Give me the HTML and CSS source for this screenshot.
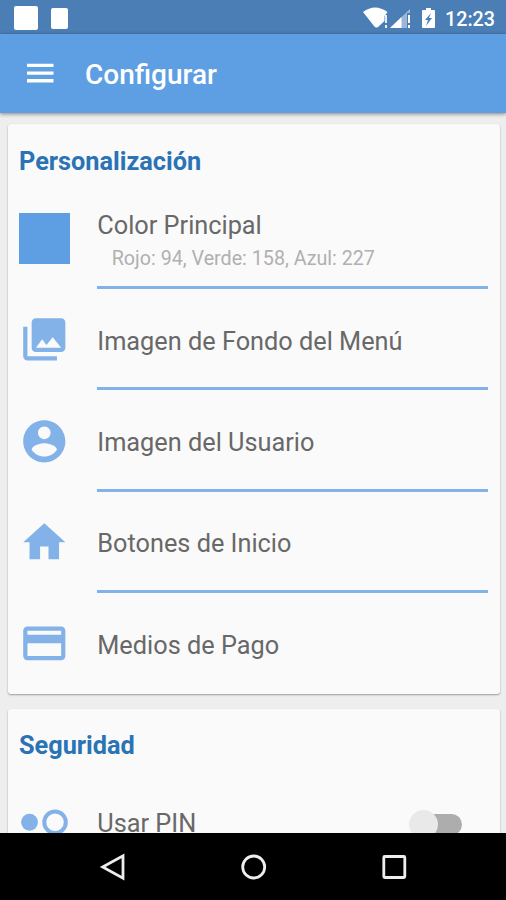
FILE: index.html
```html
<!DOCTYPE html>
<html lang="es">
<head>
<meta charset="utf-8">
<title>Configurar</title>
<link rel="stylesheet" href="styles.css">
</head>
<body>
<div class="screen">
  <header class="status">
    <span class="notice notice-large"></span>
    <span class="notice notice-small"></span>
    <svg class="status-icons" viewBox="0 0 78 28" width="78" height="28">
      <path fill="#fff" d="M0 8Q12-1 24.500 8L21.500 12V17L15 23Q13 24.500 11 22Z"/>
      <path fill="#fff" fill-opacity=".85" d="M22 11h2v8h-2zM22 21h2v3h-2z"/>
      <path fill="#fff" fill-opacity=".45" d="M27 24L47 5V9H44V24Z"/>
      <path fill="#fff" d="M27 24L38.500 13V24ZM45 11h2v8h-2zM45 21h2v3h-2z"/>
      <path fill="#fff" d="M63 4h5v2h3q1 0 1 1v16q0 1-1 1H60q-1 0-1-1V7q0-1 1-1h3z"/>
      <path fill="#4b7eb5" d="M68 9l-6 7h3l-2 6 6-8h-3z"/>
    </svg>
    <span class="clock">12:23</span>
  </header>
  <div class="toolbar">
    <svg class="menu" viewBox="0 0 27 20" width="27" height="20" fill="#fff"><path d="M0 .7h26.500v3.300H0zM0 8.400h26.500v3.300H0zM0 16.100h26.500v3.300H0z"/></svg>
    <h1 class="title">Configurar</h1>
  </div>
  <main class="content">
    <section class="card">
      <h2 class="heading heading-first">Personalización</h2>
      <div class="row row-color">
        <span class="swatch"></span>
        <div class="cell"><span class="label">Color Principal</span><span class="detail">Rojo: 94, Verde: 158, Azul: 227</span></div>
      </div>
      <div class="row">
        <svg class="icon" viewBox="0 0 24 24"><path d="M22 16V4c0-1.100-.9-2-2-2H8c-1.100 0-2 .9-2 2v12c0 1.100.9 2 2 2h12c1.100 0 2-.9 2-2zm-11-4l2.030 2.710L16 11l4 5H8l3-4zM2 6v14c0 1.100.9 2 2 2h14v-2H4V6H2z"/></svg>
        <div class="cell"><span class="label">Imagen de Fondo del Menú</span></div>
      </div>
      <div class="row">
        <svg class="icon" viewBox="0 0 24 24"><path d="M12 2C6.480 2 2 6.480 2 12s4.480 10 10 10 10-4.480 10-10S17.520 2 12 2zm0 3c1.660 0 3 1.340 3 3s-1.340 3-3 3-3-1.340-3-3 1.340-3 3-3zm0 14.200c-2.500 0-4.710-1.280-6-3.220.03-1.990 4-3.080 6-3.080 1.990 0 5.970 1.090 6 3.080-1.290 1.940-3.500 3.220-6 3.220z"/></svg>
        <div class="cell"><span class="label">Imagen del Usuario</span></div>
      </div>
      <div class="row">
        <svg class="icon" viewBox="0 0 24 24"><path d="M10 20v-6h4v6h5v-8h3L12 3 2 12h3v8z"/></svg>
        <div class="cell"><span class="label">Botones de Inicio</span></div>
      </div>
      <div class="row">
        <svg class="icon" viewBox="0 0 24 24"><path d="M20 4H4c-1.110 0-1.990.89-1.990 2L2 18c0 1.110.89 2 2 2h16c1.110 0 2-.89 2-2V6c0-1.110-.89-2-2-2zm0 14H4v-6h16v6zm0-10H4V6h16v2z"/></svg>
        <div class="cell cell-last"><span class="label">Medios de Pago</span></div>
      </div>
    </section>
    <section class="card card-security">
      <h2 class="heading">Seguridad</h2>
      <div class="row">
        <svg class="icon" viewBox="0 0 24 24"><circle cx="5" cy="12" r="4"/><circle cx="17.100" cy="12" r="5.100" fill="none" stroke="#82b2e7" stroke-width="1.900"/></svg>
        <div class="cell cell-last"><span class="label">Usar PIN</span><span class="switch"><span class="thumb"></span></span></div>
      </div>
    </section>
  </main>
  <nav class="navbar">
    <svg viewBox="0 0 30 30" width="30" height="30"><path d="M4.700 15L25 3.800V26.200Z"/></svg>
    <svg viewBox="0 0 30 30" width="30" height="30"><circle cx="15.700" cy="15" r="11"/></svg>
    <svg viewBox="0 0 30 30" width="30" height="30"><rect x="5.800" y="4.500" width="21" height="21" rx="1"/></svg>
  </nav>
</div>
</body>
</html>
```

FILE: styles.css
```css
* { box-sizing: border-box; }
body { margin: 0; font-family: Roboto, "Liberation Sans", sans-serif; }
.screen { width: 506px; height: 900px; display: flex; flex-direction: column; overflow: hidden; background: #eee; }
.status { height: 34px; flex: none; display: flex; align-items: flex-start; background: #4b7eb5; padding-left: 14px; }
.notice { background: #fff; border-radius: 2px; }
.notice-large { width: 24px; height: 24px; margin-top: 6px; }
.notice-small { width: 17px; height: 21px; margin: 8px 0 0 13px; }
.status-icons { margin: 4px 0 0 295px; }
.clock { margin-left: 4px; font-size: 19.700px; line-height: 39px; font-weight: 500; color: #fff; }
.toolbar { height: 79px; flex: none; display: flex; align-items: center; background: #5e9ee3; padding-left: 26.500px; box-shadow: 0 1px 4px rgba(0,0,0,.45); z-index: 1; }
.menu { flex: none; margin-top: -1px; }
.title { margin: 3px 0 0 31.500px; font-size: 28px; line-height: 34px; font-weight: 500; color: #fff; }
.content { flex: 1; min-height: 0; overflow: hidden; padding: 11px 6px 0 8px; }
.card { height: 570px; padding: 0 12px 0 11px; border-radius: 3px; background: #fafafa; box-shadow: 0 1px 2px rgba(0,0,0,.35); }
.card-security { margin-top: 15px; height: 200px; }
.heading { margin: 0; height: 63px; padding-top: 22px; font-size: 25.300px; line-height: 30px; font-weight: 700; color: #2a73b5; }
.heading-first { height: 64px; padding-top: 23px; }
.row { display: flex; height: 101.200px; align-items: stretch; }
.icon { width: 50.600px; height: 50.600px; flex: none; align-self: center; fill: #82b2e7; }
.swatch { width: 51px; height: 51px; flex: none; align-self: center; background: #5e9ee3; }
.cell { flex: 1; margin-left: 27.700px; border-bottom: 3px solid #82b2e7; display: flex; align-items: center; padding-top: 7px; font-size: 25.300px; line-height: 30px; color: #686868; white-space: nowrap; }
.cell-last { border-bottom: 0; padding-top: 5px; }
.row-color .cell { margin-left: 27.300px; flex-direction: column; align-items: flex-start; padding-top: 23px; }
.detail { margin: 6px 0 0 14.400px; font-size: 19.700px; line-height: 24px; color: #b0b0b0; }
.switch { width: 48px; height: 21px; margin: 0 26px 0 auto; border-radius: 11px; background: #adadad; display: flex; align-items: center; }
.thumb { width: 29px; height: 29px; margin-left: -5px; border-radius: 50%; background: #e9e9e9; }
.card-security .row { height: 101px; }
.card-security .cell { padding-top: 3px; }
.navbar { height: 67px; flex: none; display: flex; justify-content: center; align-items: center; gap: 110px; background: #000; }
.navbar svg { fill: none; stroke: #eee; stroke-width: 2.800; }
```
